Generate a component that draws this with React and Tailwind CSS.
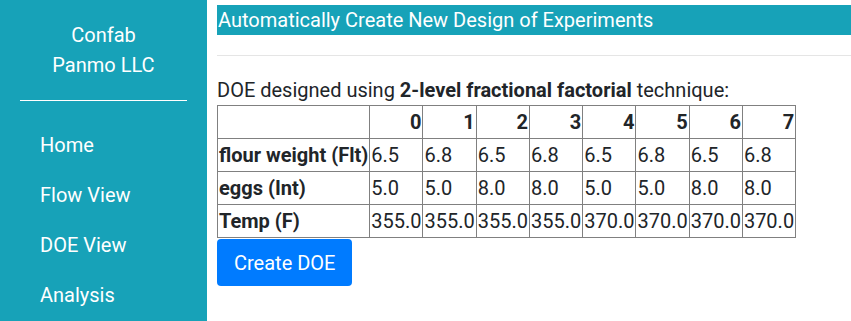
const cols = ['0', '1', '2', '3', '4', '5', '6', '7'];
const rows = [
  { name: 'flour weight (Flt)', vals: ['6.5', '6.8', '6.5', '6.8', '6.5', '6.8', '6.5', '6.8'] },
  { name: 'eggs (Int)', vals: ['5.0', '5.0', '8.0', '8.0', '5.0', '5.0', '8.0', '8.0'] },
  { name: 'Temp (F)', vals: ['355.0', '355.0', '355.0', '355.0', '370.0', '370.0', '370.0', '370.0'] },
];

function Sidebar() {
  return (
    <aside className="w-[207px] shrink-0 bg-[#17a2b8] text-white">
      <div className="pt-[20px] text-center text-[20px] leading-[30px]">
        <div>Confab</div>
        <div>Panmo LLC</div>
      </div>
      <hr className="mx-[20px] mt-[20px] border-0 border-t border-white" />
      <nav className="mt-[30px] flex flex-col gap-[22px] pl-[40px] text-[20px] leading-[28px]">
        <a>Home</a>
        <a>Flow View</a>
        <a>DOE View</a>
        <a>Analysis</a>
      </nav>
    </aside>
  );
}

export default function App() {
  return (
    <div className="flex h-[321px] w-[851px] overflow-hidden bg-white font-['Roboto',sans-serif] text-[#212529]">
      <Sidebar />
      <main className="flex-1 pl-[10px] pt-[5px]">
        <h1 className="h-[30px] whitespace-nowrap bg-[#17a2b8] pl-[1px] text-[20px] font-normal leading-[30px] text-white">
          Automatically Create New Design of Experiments
        </h1>
        <hr className="mt-[20px] border-0 border-t border-[#e5e5e5]" />
        <p className="mt-[19px] text-[20px] leading-[30px]">
          DOE designed using <b>2-level fractional factorial</b> technique:
        </p>
        <table className="border-collapse text-[20px] leading-[32px]">
          <thead>
            <tr>
              <th className="border border-[#808080]"></th>
              {cols.map((c) => (
                <th key={c} className="border border-[#808080] px-[1px] text-right font-bold">{c}</th>
              ))}
            </tr>
          </thead>
          <tbody>
            {rows.map((r) => (
              <tr key={r.name}>
                <th className="whitespace-nowrap border border-[#808080] px-[1px] text-left font-bold">{r.name}</th>
                {r.vals.map((v, i) => (
                  <td key={i} className="border border-[#808080] px-[1px]">{v}</td>
                ))}
              </tr>
            ))}
          </tbody>
        </table>
        <button className="mt-[1px] h-[47px] rounded-[4px] bg-[#007bff] px-[17px] text-[20px] text-white">
          Create DOE
        </button>
      </main>
    </div>
  );
}
